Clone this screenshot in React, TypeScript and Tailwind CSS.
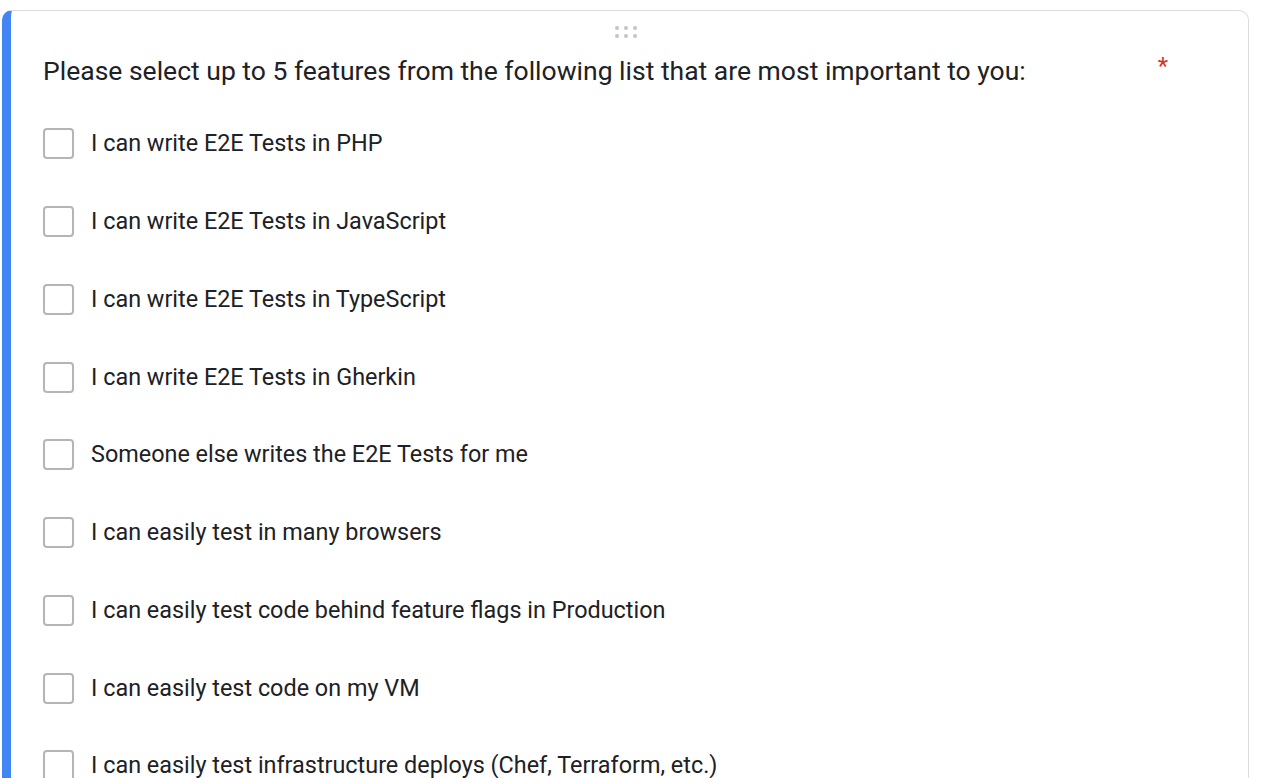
const options = [
  "I can write E2E Tests in PHP",
  "I can write E2E Tests in JavaScript",
  "I can write E2E Tests in TypeScript",
  "I can write E2E Tests in Gherkin",
  "Someone else writes the E2E Tests for me",
  "I can easily test in many browsers",
  "I can easily test code behind feature flags in Production",
  "I can easily test code on my VM",
  "I can easily test infrastructure deploys (Chef, Terraform, etc.)",
];

function DragHandle() {
  return (
    <svg width="24" height="14" viewBox="0 0 24 14" fill="#c4c4c4">
      <circle cx="3" cy="3" r="2" />
      <circle cx="12" cy="3" r="2" />
      <circle cx="21" cy="3" r="2" />
      <circle cx="3" cy="11" r="2" />
      <circle cx="12" cy="11" r="2" />
      <circle cx="21" cy="11" r="2" />
    </svg>
  );
}

export default function App() {
  return (
    <div
      className="h-[778px] overflow-hidden bg-white pt-[10px] pl-[2px] pr-[13px]"
      style={{ fontFamily: "Roboto, Arial, sans-serif" }}
    >
      <div className="h-[900px] rounded-[10px] border border-[#dadce0] border-l-[9px] border-l-[#4285f4] bg-white">
        <div className="flex h-[42px] items-center justify-center pr-[8px]">
          <DragHandle />
        </div>
        <div className="mt-[1px] flex items-center pl-[32px] pr-[80px]">
          <h1 className="text-[26.5px] leading-[32px] text-[#202124]">
            Please select up to 5 features from the following list that are most important to you:
          </h1>
          <span className="mb-[10px] ml-auto text-[24px] leading-[24px] text-[#d93025]">*</span>
        </div>
        <div className="mt-[17px] pl-[32px]">
          {options.map((o) => (
            <label key={o} className="flex h-[77.75px] items-center gap-[17px]">
              <span className="h-[31px] w-[31px] shrink-0 rounded-[4px] border-[2.5px] border-[#b5b5b5] bg-white" />
              <span className="text-[23.4px] text-[#202124]">{o}</span>
            </label>
          ))}
        </div>
      </div>
    </div>
  );
}
